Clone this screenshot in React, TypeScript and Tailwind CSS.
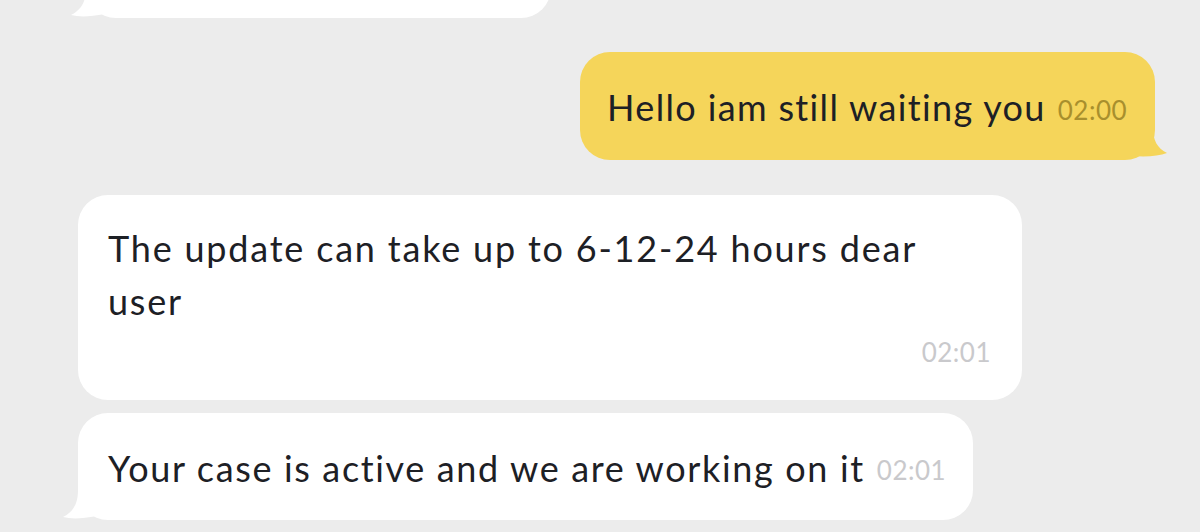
import React from "react";

const font = { fontFamily: "Lato, 'Noto Sans', sans-serif" };

const TailLeft = ({ color }: { color: string }) => (
  <svg
    className="absolute -left-[15px] bottom-0"
    width="34"
    height="30"
    viewBox="0 0 34 30"
  >
    <path d="M15 0 C15 14 10 22 0 27 C8 29 18 29 34 26 L34 0 Z" fill={color} />
  </svg>
);

const TailRight = ({ color }: { color: string }) => (
  <svg
    className="absolute -right-[12px] bottom-[2px]"
    width="34"
    height="30"
    viewBox="0 0 34 30"
  >
    <path d="M20 0 C20 12 24 20 34 25 C26 28 14 29 0 28 L0 0 Z" fill={color} />
  </svg>
);

const App: React.FC = () => {
  return (
    <div
      className="h-[532px] w-[1200px] overflow-hidden bg-[#ececec] flex flex-col text-[#1d2025]"
      style={font}
    >
      {/* previous message, cut off at top */}
      <div className="relative ml-[86px] mt-[-44px] h-[62px] w-[465px] rounded-[30px] bg-white">
        <TailLeft color="#ffffff" />
      </div>

      {/* own message */}
      <div className="relative self-end mr-[45px] mt-[34px] flex h-[108px] w-[575px] items-center rounded-[30px] bg-[#f5d55a] pl-[27px]">
        <span className="mt-[2px] text-[36px] tracking-[1.35px]">Hello iam still waiting you</span>
        <span className="ml-[12px] mt-[8px] text-[26px] tracking-[0.5px] text-[#a88f2d]">02:00</span>
        <TailRight color="#f5d55a" />
      </div>

      <div className="relative ml-[78px] mt-[35px] h-[205px] w-[944px] rounded-[30px] bg-white px-[30px] pt-[27px]">
        <p className="text-[36px] leading-[53px] tracking-[1.8px]">
          The update can take up to 6-12-24 hours dear
          <br />
          user
        </p>
        <div className="mt-[5px] pr-[1px] text-right text-[26px] tracking-[0.5px] text-[#c9c9cc]">02:01</div>
      </div>

      <div className="relative ml-[78px] mt-[13px] flex h-[107px] w-[895px] items-center rounded-[30px] bg-white pl-[30px]">
        <span className="mt-[2px] text-[36px] tracking-[1.65px]">Your case is active and we are working on it</span>
        <span className="ml-[12px] mt-[8px] text-[26px] tracking-[0.5px] text-[#c9c9cc]">02:01</span>
        <TailLeft color="#ffffff" />
      </div>
    </div>
  );
};

export default App;
